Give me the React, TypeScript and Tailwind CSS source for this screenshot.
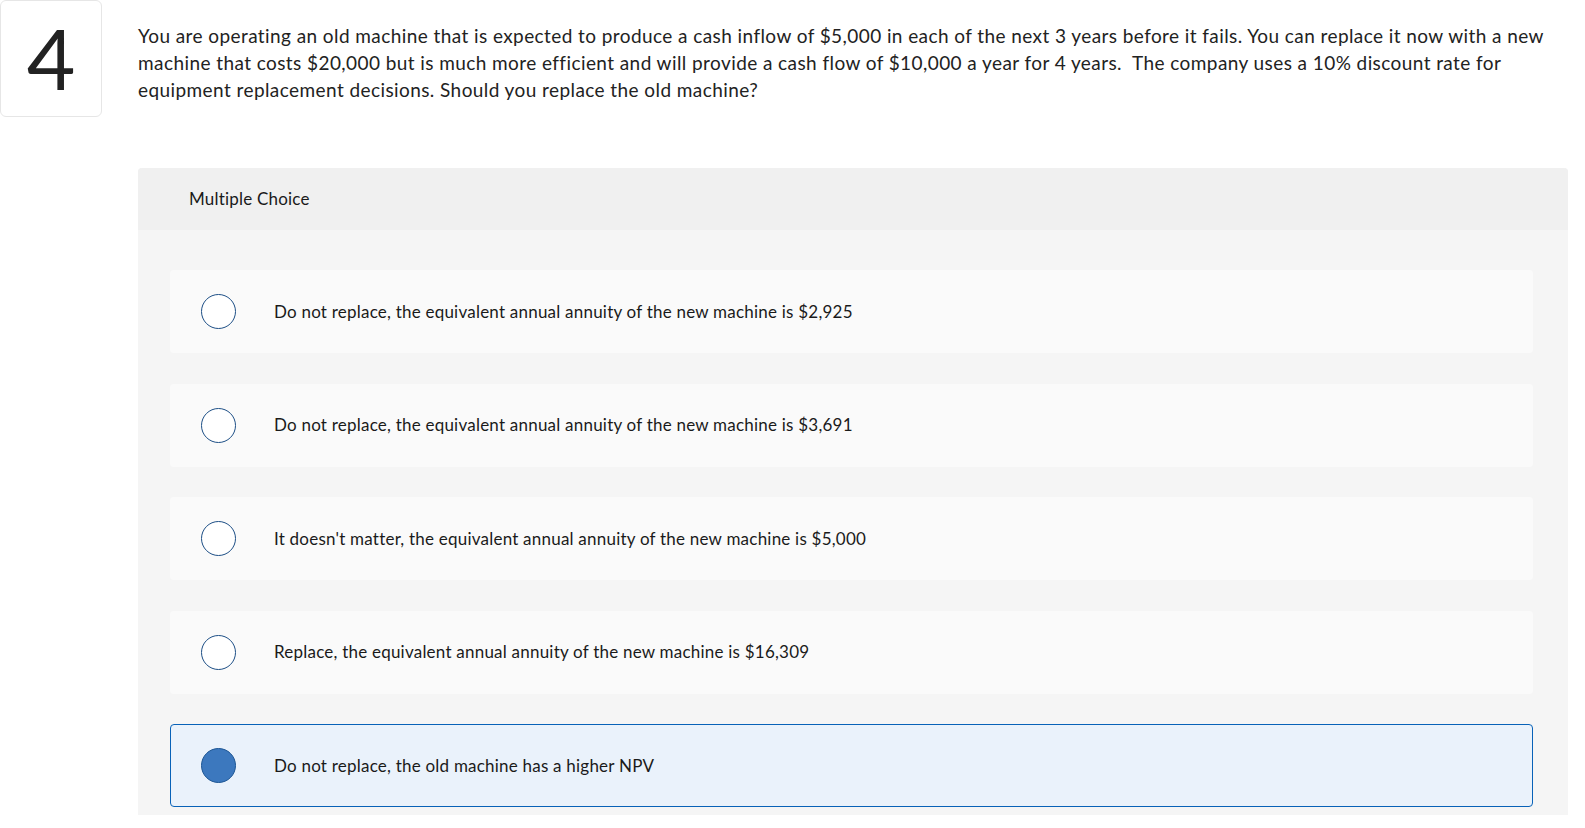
import React from "react";

const options = [
  "Do not replace, the equivalent annual annuity of the new machine is $2,925",
  "Do not replace, the equivalent annual annuity of the new machine is $3,691",
  "It doesn't matter, the equivalent annual annuity of the new machine is $5,000",
  "Replace, the equivalent annual annuity of the new machine is $16,309",
  "Do not replace, the old machine has a higher NPV",
];

export default function App() {
  const selected = 4;
  return (
    <div className="flex w-[1585px] min-h-[828px] bg-white text-[#222]" style={{ fontFamily: "Lato, 'Open Sans', sans-serif" }}>
      <div className="flex h-[117px] w-[102px] shrink-0 items-center justify-center rounded-[6px] border border-[#e6e6e6] text-[84px] leading-none text-[#222]">
        <span className="-mt-[2px]">4</span>
      </div>
      <div className="ml-[36px] mr-[17px] flex flex-1 flex-col">
        <p className="pt-[22px] text-[19px] leading-[27px] tracking-[0.42px] text-[#222]">
          You are operating an old machine that is expected to produce a cash inflow of $5,000 in each of the next 3 years before it fails. You can replace it now with a new machine that costs $20,000 but is much more efficient and will provide a cash flow of $10,000 a year for 4 years.&nbsp; The company uses a 10% discount rate for equipment replacement decisions. Should you replace the old machine?
        </p>
        <div className="mt-[65px] overflow-hidden rounded-t-[4px] bg-[#f5f5f5]">
          <div className="flex h-[62px] items-center bg-[#f0f0f0] pl-[51px] text-[17px] tracking-[0.2px] text-[#1a1a1a]">
            Multiple Choice
          </div>
          <div className="flex flex-col gap-[30.5px] pl-[32px] pr-[35px] pb-[8px] pt-[40px]">
            {options.map((o, i) => {
              const sel = i === selected;
              return (
                <div
                  key={i}
                  className={
                    sel
                      ? "flex h-[83px] items-center rounded-[4px] border-[1.5px] border-[#0862b8] bg-[#eaf2fb] pl-[30px]"
                      : "flex h-[83px] items-center rounded-[4px] bg-[#fafafa] pl-[31px]"
                  }
                >
                  <span
                    className={
                      sel
                        ? "h-[35px] w-[35px] shrink-0 rounded-full border-[1.5px] border-[#1d5694] bg-[#3c78be]"
                        : "h-[35px] w-[35px] shrink-0 rounded-full border-[1.5px] border-[#1d4f86] bg-white"
                    }
                  />
                  <span className="ml-[38px] text-[17px] tracking-[0.22px] text-[#1a1a1a]">{o}</span>
                </div>
              );
            })}
          </div>
        </div>
      </div>
    </div>
  );
}
